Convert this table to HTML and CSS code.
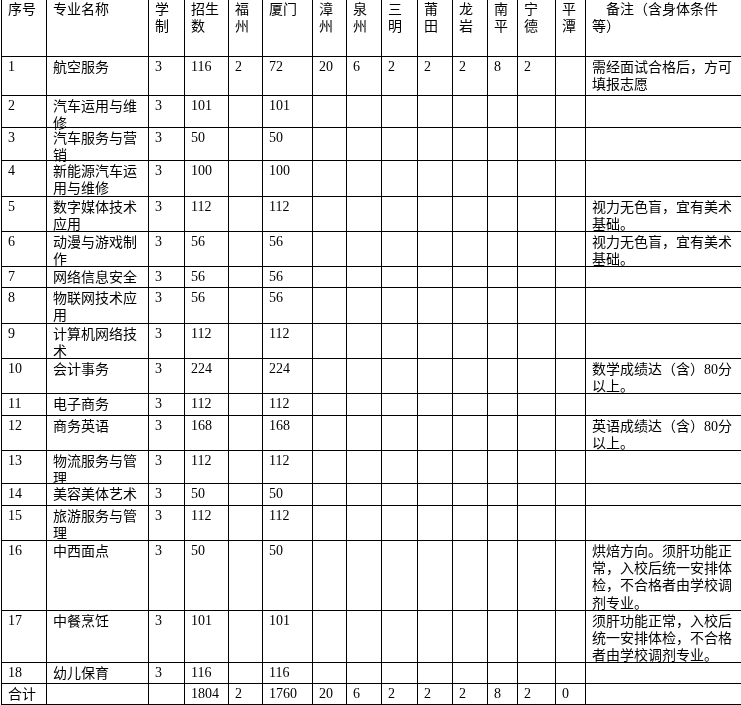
FILE: index.html
```html
<!DOCTYPE html>
<html lang="zh-CN">
<head>
<meta charset="utf-8">
<title>招生计划</title>
<link rel="stylesheet" href="styles.css">
</head>
<body>
<div class="sheet">
<div class="c">序号</div><div class="c">专业名称</div><div class="c">学制</div><div class="c">招生数</div><div class="c">福州</div><div class="c">厦门</div><div class="c">漳州</div><div class="c">泉州</div><div class="c">三明</div><div class="c">莆田</div><div class="c">龙岩</div><div class="c">南平</div><div class="c">宁德</div><div class="c">平潭</div><div class="c indent">备注（含身体条件等）</div>
<div class="c n">1</div><div class="c">航空服务</div><div class="c n">3</div><div class="c n">116</div><div class="c n">2</div><div class="c n">72</div><div class="c n">20</div><div class="c n">6</div><div class="c n">2</div><div class="c n">2</div><div class="c n">2</div><div class="c n">8</div><div class="c n">2</div><div class="c"></div><div class="c">需经面试合格后，方可填报志愿</div>
<div class="c n">2</div><div class="c">汽车运用与维修</div><div class="c n">3</div><div class="c n">101</div><div class="c"></div><div class="c n">101</div><div class="c"></div><div class="c"></div><div class="c"></div><div class="c"></div><div class="c"></div><div class="c"></div><div class="c"></div><div class="c"></div><div class="c"></div>
<div class="c n">3</div><div class="c">汽车服务与营销</div><div class="c n">3</div><div class="c n">50</div><div class="c"></div><div class="c n">50</div><div class="c"></div><div class="c"></div><div class="c"></div><div class="c"></div><div class="c"></div><div class="c"></div><div class="c"></div><div class="c"></div><div class="c"></div>
<div class="c n">4</div><div class="c">新能源汽车运用与维修</div><div class="c n">3</div><div class="c n">100</div><div class="c"></div><div class="c n">100</div><div class="c"></div><div class="c"></div><div class="c"></div><div class="c"></div><div class="c"></div><div class="c"></div><div class="c"></div><div class="c"></div><div class="c"></div>
<div class="c n">5</div><div class="c">数字媒体技术应用</div><div class="c n">3</div><div class="c n">112</div><div class="c"></div><div class="c n">112</div><div class="c"></div><div class="c"></div><div class="c"></div><div class="c"></div><div class="c"></div><div class="c"></div><div class="c"></div><div class="c"></div><div class="c">视力无色盲，宜有美术基础。</div>
<div class="c n">6</div><div class="c">动漫与游戏制作</div><div class="c n">3</div><div class="c n">56</div><div class="c"></div><div class="c n">56</div><div class="c"></div><div class="c"></div><div class="c"></div><div class="c"></div><div class="c"></div><div class="c"></div><div class="c"></div><div class="c"></div><div class="c">视力无色盲，宜有美术基础。</div>
<div class="c n">7</div><div class="c">网络信息安全</div><div class="c n">3</div><div class="c n">56</div><div class="c"></div><div class="c n">56</div><div class="c"></div><div class="c"></div><div class="c"></div><div class="c"></div><div class="c"></div><div class="c"></div><div class="c"></div><div class="c"></div><div class="c"></div>
<div class="c n">8</div><div class="c">物联网技术应用</div><div class="c n">3</div><div class="c n">56</div><div class="c"></div><div class="c n">56</div><div class="c"></div><div class="c"></div><div class="c"></div><div class="c"></div><div class="c"></div><div class="c"></div><div class="c"></div><div class="c"></div><div class="c"></div>
<div class="c n">9</div><div class="c">计算机网络技术</div><div class="c n">3</div><div class="c n">112</div><div class="c"></div><div class="c n">112</div><div class="c"></div><div class="c"></div><div class="c"></div><div class="c"></div><div class="c"></div><div class="c"></div><div class="c"></div><div class="c"></div><div class="c"></div>
<div class="c n">10</div><div class="c">会计事务</div><div class="c n">3</div><div class="c n">224</div><div class="c"></div><div class="c n">224</div><div class="c"></div><div class="c"></div><div class="c"></div><div class="c"></div><div class="c"></div><div class="c"></div><div class="c"></div><div class="c"></div><div class="c">数学成绩达（含）80分以上。</div>
<div class="c n">11</div><div class="c">电子商务</div><div class="c n">3</div><div class="c n">112</div><div class="c"></div><div class="c n">112</div><div class="c"></div><div class="c"></div><div class="c"></div><div class="c"></div><div class="c"></div><div class="c"></div><div class="c"></div><div class="c"></div><div class="c"></div>
<div class="c n">12</div><div class="c">商务英语</div><div class="c n">3</div><div class="c n">168</div><div class="c"></div><div class="c n">168</div><div class="c"></div><div class="c"></div><div class="c"></div><div class="c"></div><div class="c"></div><div class="c"></div><div class="c"></div><div class="c"></div><div class="c">英语成绩达（含）80分以上。</div>
<div class="c n">13</div><div class="c">物流服务与管理</div><div class="c n">3</div><div class="c n">112</div><div class="c"></div><div class="c n">112</div><div class="c"></div><div class="c"></div><div class="c"></div><div class="c"></div><div class="c"></div><div class="c"></div><div class="c"></div><div class="c"></div><div class="c"></div>
<div class="c n">14</div><div class="c">美容美体艺术</div><div class="c n">3</div><div class="c n">50</div><div class="c"></div><div class="c n">50</div><div class="c"></div><div class="c"></div><div class="c"></div><div class="c"></div><div class="c"></div><div class="c"></div><div class="c"></div><div class="c"></div><div class="c"></div>
<div class="c n">15</div><div class="c">旅游服务与管理</div><div class="c n">3</div><div class="c n">112</div><div class="c"></div><div class="c n">112</div><div class="c"></div><div class="c"></div><div class="c"></div><div class="c"></div><div class="c"></div><div class="c"></div><div class="c"></div><div class="c"></div><div class="c"></div>
<div class="c n">16</div><div class="c">中西面点</div><div class="c n">3</div><div class="c n">50</div><div class="c"></div><div class="c n">50</div><div class="c"></div><div class="c"></div><div class="c"></div><div class="c"></div><div class="c"></div><div class="c"></div><div class="c"></div><div class="c"></div><div class="c">烘焙方向。须肝功能正常，入校后统一安排体检，不合格者由学校调剂专业。</div>
<div class="c n">17</div><div class="c">中餐烹饪</div><div class="c n">3</div><div class="c n">101</div><div class="c"></div><div class="c n">101</div><div class="c"></div><div class="c"></div><div class="c"></div><div class="c"></div><div class="c"></div><div class="c"></div><div class="c"></div><div class="c"></div><div class="c">须肝功能正常，入校后统一安排体检，不合格者由学校调剂专业。</div>
<div class="c n">18</div><div class="c">幼儿保育</div><div class="c n">3</div><div class="c n">116</div><div class="c"></div><div class="c n">116</div><div class="c"></div><div class="c"></div><div class="c"></div><div class="c"></div><div class="c"></div><div class="c"></div><div class="c"></div><div class="c"></div><div class="c"></div>
<div class="c">合计</div><div class="c"></div><div class="c"></div><div class="c n">1804</div><div class="c n">2</div><div class="c n">1760</div><div class="c n">20</div><div class="c n">6</div><div class="c n">2</div><div class="c n">2</div><div class="c n">2</div><div class="c n">8</div><div class="c n">2</div><div class="c n">0</div><div class="c"></div>
</div>
</body>
</html>
```
FILE: styles.css
```css
html, body {
  margin: 0;
  padding: 0;
  background: #fff;
  overflow: hidden;
}
body {
  font-family: "Liberation Serif", "Noto Sans CJK SC", serif;
  font-size: 14px;
  color: #000;
}
.sheet {
  display: grid;
  grid-template-columns: 45px 102px 36px 44px 34px 50px 34px 35px 36px 35px 35px 30px 38px 30px 156px;
  grid-template-rows: 58px 39px 32px 33px 36px 35px 35px 21px 36px 35px 35px 22px 35px 33px 22px 35px 70px 52px 21px 21px;
  width: max-content;
  margin: -2px 0 0 1px;
  border-left: 1px solid #000;
  border-top: 1px solid #000;
  background: #fff;
  filter: grayscale(1);
}
.c {
  box-sizing: border-box;
  min-width: 0;
  min-height: 0;
  border-right: 1px solid #000;
  border-bottom: 1px solid #000;
  padding: 2px 6px 0 6px;
  line-height: 17.2px;
  overflow: visible;
}
.n {
  padding-top: 1px;
}
.indent {
  text-indent: 14px;
}
```
